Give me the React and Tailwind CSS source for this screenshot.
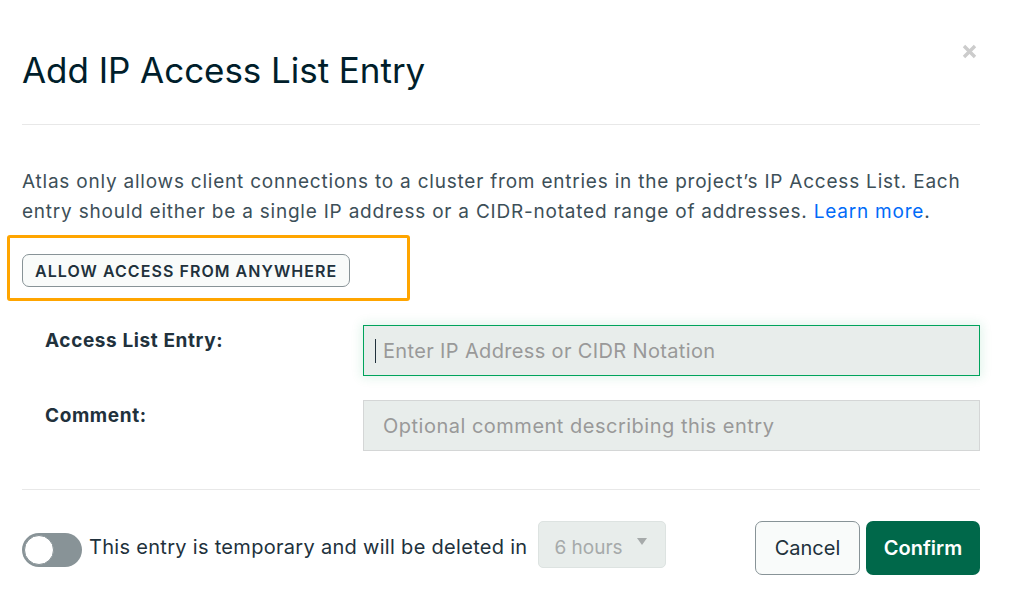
import { useState } from "react";

const Toggle = ({ on, onChange }) => (
  <button
    onClick={() => onChange(!on)}
    className="relative mt-[12px] w-[60px] h-[34px] rounded-full bg-[#889397] shrink-0"
  >
    <span
      className={`absolute top-[2px] w-[30px] h-[30px] rounded-full bg-white border border-[#889397] ${
        on ? "left-[28px]" : "left-[2px]"
      }`}
    />
  </button>
);

const App = () => {
  const [temporary, setTemporary] = useState(false);

  return (
    <div className="relative w-[1023px] h-[601px] bg-white overflow-hidden font-['Inter',sans-serif] text-[#21313c]">
      {/* Header */}
      <div className="flex items-start justify-between pl-[22px] pr-[46px]">
        <h1 className="pt-[48px] text-[35px] leading-[44px] font-normal tracking-[-0.05px] text-[#001e2b]">
          Add IP Access List Entry
        </h1>
        <button className="mt-[44px] text-[#cccccc]">
          <svg width="15" height="15" viewBox="0 0 15 15">
            <path d="M2 2 L13 13 M13 2 L2 13" stroke="currentColor" strokeWidth="3.4" />
          </svg>
        </button>
      </div>
      <div className="ml-[22px] mt-[32px] mr-[43px] border-t border-[#e8e8e8]" />

      {/* Body */}
      <div className="pl-[22px] pr-[43px] pt-[42px]">
        <p className="text-[19px] leading-[30px] text-[#3d4f58] tracking-[0.78px] whitespace-nowrap">
          Atlas only allows client connections to a cluster from entries in the project’s IP Access List. Each
          <br />
          entry should either be a single IP address or a CIDR-notated range of addresses.{" "}
          <a className="text-[#016bf8]" href="#">
            Learn more
          </a>
          .
        </p>

        <div className="relative mt-[27px]">
          <button className="h-[33px] px-[12px] rounded-[7px] border border-[#889397] bg-[#f9fbfa] text-[16px] font-semibold tracking-[1.05px] text-[#21313c]">
            ALLOW ACCESS FROM ANYWHERE
          </button>
          <div className="absolute left-[-15px] top-[-19px] w-[403px] h-[66px] rounded-[3px] border-[3px] border-[#ffa500] pointer-events-none" />
        </div>

        <div className="grid grid-cols-[341px_1fr] gap-y-[24px] mt-[38px]">
          <label className="pl-[23px] pt-[2px] text-[19px] font-bold tracking-[0.6px] text-[#21313c]">
            Access List Entry:
          </label>
          <div className="flex items-center h-[51px] bg-[#e8edeb] border border-[#00a35c] shadow-[0_0_10px_2px_rgba(0,163,92,0.12)] pl-[11px]">
            <span className="w-px h-[24px] bg-[#21313c] mr-[7px]" />
            <span className="text-[20px] tracking-[0.35px] text-[#999999]">Enter IP Address or CIDR Notation</span>
          </div>
          <label className="pl-[23px] pt-[2px] text-[19px] font-bold tracking-[0.6px] text-[#21313c]">
            Comment:
          </label>
          <div className="flex items-center h-[51px] bg-[#e8edeb] border border-[#d4d6d6] pl-[19px]">
            <span className="text-[20px] tracking-[0.5px] text-[#999999]">Optional comment describing this entry</span>
          </div>
        </div>

        <div className="mt-[38px] border-t border-[#e8e8e8]" />

        {/* Footer */}
        <div className="flex items-start justify-between mt-[31px]">
          <div className="flex items-start gap-[7px]">
            <Toggle on={temporary} onChange={setTemporary} />
            <span className="mt-[12px] text-[20px] leading-[28px] tracking-[0.3px] text-[#21313c]">
              This entry is temporary and will be deleted in
            </span>
            <div className="ml-[4px] flex items-start justify-between w-[128px] h-[47px] rounded-[5px] bg-[#e8edeb] border border-[#dde3e1] pl-[15px] pr-[18px]">
              <span className="mt-[14px] text-[19px] leading-[24px] text-[#a6aaaa]">6 hours</span>
              <svg className="mt-[16px]" width="10" height="8" viewBox="0 0 10 8">
                <path d="M0 0 L10 0 L5 7 Z" fill="#a6aaaa" />
              </svg>
            </div>
          </div>
          <div className="flex items-center gap-[6px]">
            <button className="w-[105px] h-[54px] rounded-[7px] border border-[#889397] bg-[#f9fbfa] text-[20px] text-[#21313c]">
              Cancel
            </button>
            <button className="w-[114px] h-[54px] rounded-[7px] bg-[#00684a] text-[20px] font-semibold text-white">
              Confirm
            </button>
          </div>
        </div>
      </div>
    </div>
  );
};

export default App;
